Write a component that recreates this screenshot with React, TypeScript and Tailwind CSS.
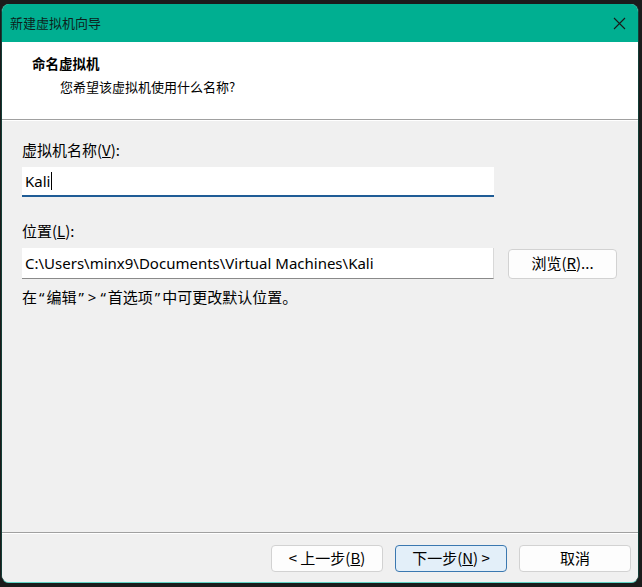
import React from "react";

const cjk = '"Noto Sans CJK SC", "Noto Sans", sans-serif';
const latin = '"Noto Sans", "Noto Sans CJK SC", sans-serif';

function Btn({ children, primary }: { children: React.ReactNode; primary?: boolean }) {
  return (
    <button
      className={
        primary
          ? "w-[112px] h-[27px] rounded-[4px] border border-[#3b78b0] bg-[#e3eff9] text-[15px] text-black flex items-center justify-center"
          : "w-[112px] h-[27px] rounded-[4px] border border-[#d2d2d2] bg-[#fdfdfd] text-[15px] text-black flex items-center justify-center"
      }
    >
      {children}
    </button>
  );
}

// half-width punctuation inside the hint line
function Q({ c }: { c: string }) {
  return (
    <span className="px-[2px]" style={{ fontFamily: latin }}>
      {c}
    </span>
  );
}

export default function App() {
  return (
    <div className="relative w-[642px] h-[587px] bg-[#1b1b1b] overflow-hidden" style={{ fontFamily: cjk }}>
      {/* backdrop: bottoms of the app banner letters peeking above the dialog */}
      <div
        className="absolute left-[140px] -top-[23px] text-[26px] leading-[26px] font-bold tracking-[2px] text-white whitespace-nowrap"
        style={{ fontFamily: latin }}
      >
        VMWARE WORKSTATION 17
      </div>

      {/* dialog window */}
      <div className="relative mt-[4px] ml-[1px] w-[638px] h-[579px] rounded-[8px] overflow-hidden border-x border-b border-x-[#123d37] border-b-[#5fd6c6] bg-[#f0f0f0] flex flex-col">
        {/* title bar */}
        <div className="h-[38px] bg-[#00af91] flex items-center justify-between pl-[8px] pr-[12px]">
          <span className="text-[13px] text-[#0d1f1c]">新建虚拟机向导</span>
          <svg width="13" height="13" viewBox="0 0 13 13">
            <path d="M1 1 L12 12 M12 1 L1 12" stroke="#1a1a1a" strokeWidth="1.1" fill="none" />
          </svg>
        </div>

        {/* header */}
        <div className="h-[77px] bg-white pt-[12px]">
          <div className="pl-[30px] text-[13.5px] leading-[18px] font-bold text-black">命名虚拟机</div>
          <div className="pl-[58px] mt-[6px] text-[13px] leading-[18px] text-black">您希望该虚拟机使用什么名称?</div>
        </div>
        <div className="h-[1px] bg-[#a0a0a0]" />
        <div className="h-[1px] bg-white" />

        {/* body */}
        <div className="flex-1 bg-[#f0f0f0] px-[20px] pt-[19px] text-[15px] text-black">
          <div className="leading-[20px]">
            虚拟机名称(<span className="underline">V</span>):
          </div>
          <div className="mt-[7px] w-[472px] h-[30px] bg-white border-b-2 border-[#1f5c96] flex items-center pl-[3px]">
            <span style={{ fontFamily: latin }} className="text-[15px]">Kali</span>
            <span className="w-[1px] h-[18px] bg-black ml-[1px]" />
          </div>

          <div className="mt-[24px] leading-[20px]">
            位置(<span className="underline">L</span>):
          </div>
          <div className="mt-[7px] flex items-center">
            <div className="w-[472px] h-[31px] bg-white border-b border-r border-b-[#8a8a8a] border-r-[#d8d8d8] flex items-center pl-[3px]">
              <span style={{ fontFamily: latin }} className="text-[15px] whitespace-nowrap">
                C:\Users\minx9\Documents\Virtual Machines\Kali
              </span>
            </div>
            <button className="ml-[14px] w-[109px] h-[30px] rounded-[4px] border border-[#d2d2d2] bg-[#fdfdfd] text-[15px] text-black flex items-center justify-center">
              浏览(<span className="underline">R</span>)...
            </button>
          </div>

          <div className="mt-[8px] leading-[20px]">
            在<Q c="“" />编辑<Q c="”" /><Q c=">" /><Q c="“" />首选项<Q c="”" />中可更改默认位置。
          </div>
        </div>

        <div className="h-[1px] bg-[#a0a0a0]" />
        <div className="h-[1px] bg-white" />

        {/* footer */}
        <div className="h-[48px] bg-[#f0f0f0] flex justify-end gap-[12px] pt-[11px] pr-[7px]">
          <Btn>
            &lt; 上一步(<span className="underline">B</span>)
          </Btn>
          <Btn primary>
            下一步(<span className="underline">N</span>) &gt;
          </Btn>
          <Btn>取消</Btn>
        </div>
      </div>
    </div>
  );
}
